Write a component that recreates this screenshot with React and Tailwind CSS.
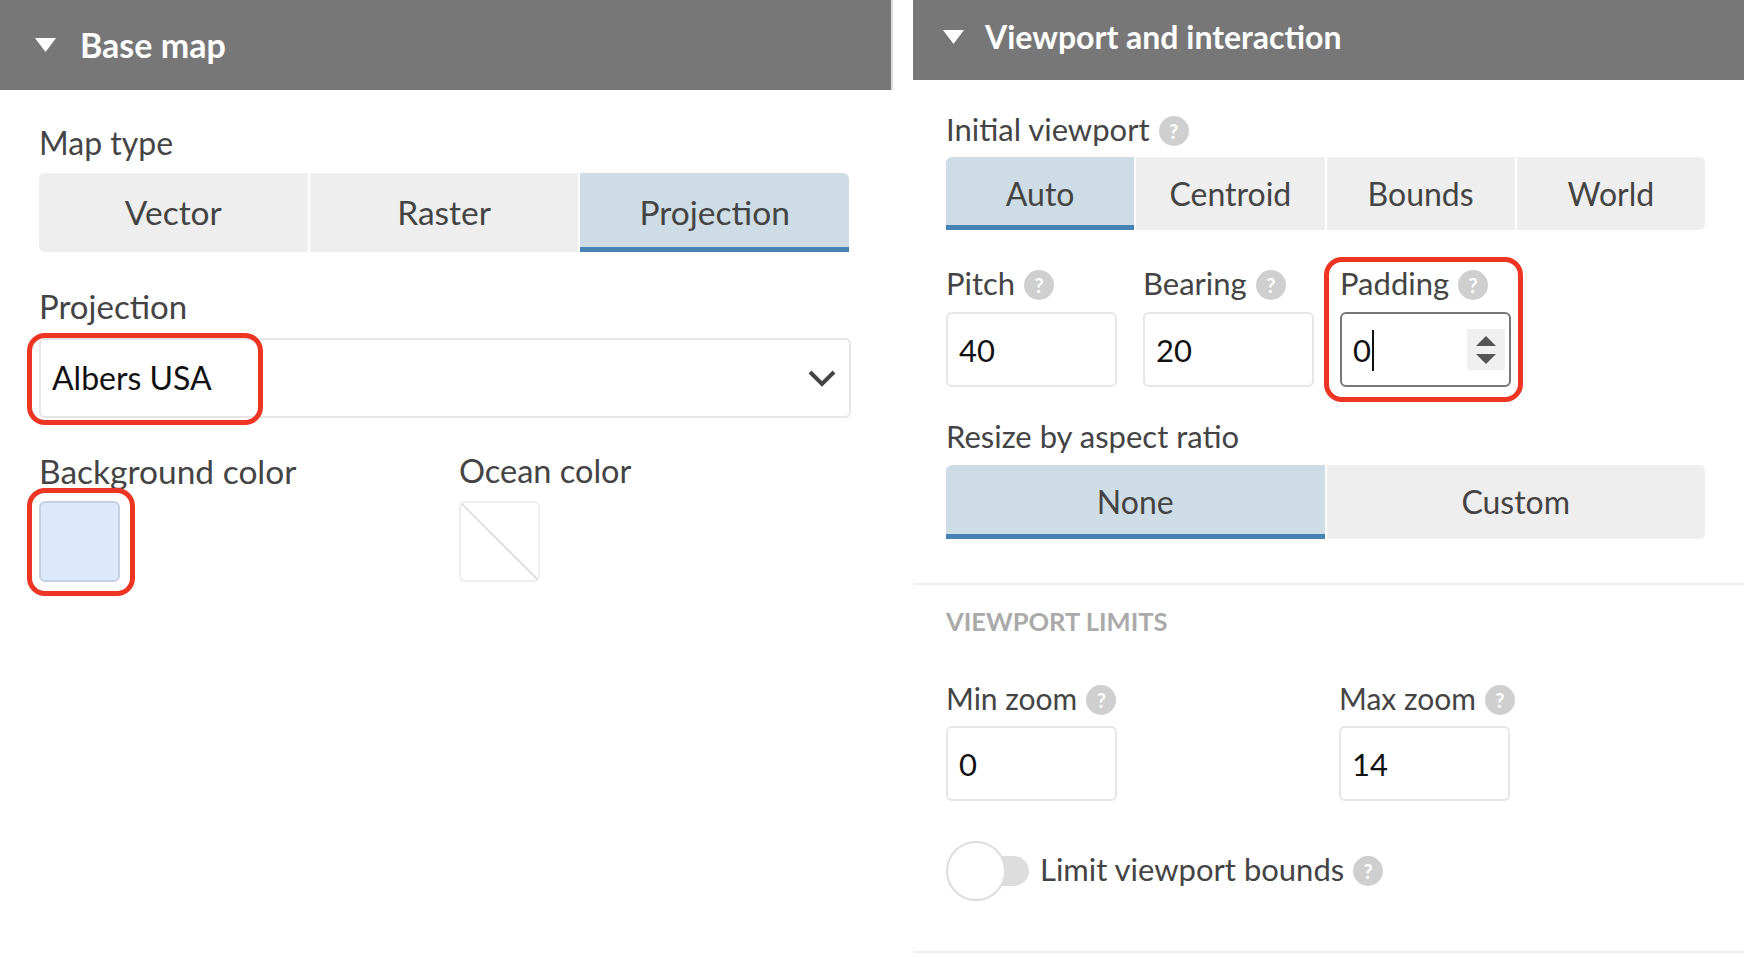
import React from "react";

const font = "font-['Lato','Noto_Sans',sans-serif]";

const Help = () => (
  <span className="ml-[9px] inline-flex h-[30px] w-[30px] shrink-0 items-center justify-center rounded-full bg-[#cfcfcf] text-[20px] font-bold leading-none text-white">
    ?
  </span>
);

// label sizes differ a little per label, the reference font has other widths than Lato
const Label = ({ children, help, size = "text-[31px]" }) => (
  <div className={`flex h-[38px] items-center whitespace-nowrap leading-[38px] text-[#444] ${size}`}>
    <span className="-mt-[4px]">{children}</span>
    {help && <Help />}
  </div>
);

const Triangle = () => (
  <svg width="21" height="14" viewBox="0 0 21 14" className="shrink-0">
    <polygon points="0,0 21,0 10.5,14" fill="#fff" />
  </svg>
);

const Segments = ({ items, active, height, large }) => (
  <div className={`flex gap-[2px] ${height}`}>
    {items.map((item, i) => {
      const isActive = item === active;
      return (
        <div
          key={item}
          className={`flex flex-1 items-center justify-center border-b-[5px] pt-[5px] text-[#444] ${large ? "text-[33.5px]" : "text-[32px]"} ${
            isActive ? "border-[#4682b4] bg-[#cedce5]" : "border-[#eeeeee] bg-[#eeeeee]"
          } ${i === 0 ? (isActive ? "rounded-tl-[6px]" : "rounded-l-[6px]") : ""} ${
            i === items.length - 1 ? (isActive ? "rounded-tr-[6px]" : "rounded-r-[6px]") : ""
          }`}
        >
          {item}
        </div>
      );
    })}
  </div>
);

const NumberField = ({ value, focused }) => (
  <div
    className={
      focused
        ? "relative flex h-[75px] w-[171px] items-center rounded-[6px] border-2 border-[#777] pl-[11px] pt-[2px] text-[31px] text-[#111]"
        : "flex h-[75px] w-[171px] items-center rounded-[6px] border-2 border-[#e6e6e6] pl-[11px] pt-[2px] text-[31px] text-[#111]"
    }
  >
    <span>{value}</span>
    {focused && (
      <>
        <span className="ml-[1px] h-[41px] w-[2px] bg-[#111]" />
        <span className="absolute right-[4px] top-[15px] flex h-[41px] w-[38px] flex-col items-center justify-center gap-[8px] bg-[#f0f0f0]">
          <svg width="20" height="10" viewBox="0 0 20 10">
            <polygon points="10,0 20,10 0,10" fill="#555" />
          </svg>
          <svg width="20" height="10" viewBox="0 0 20 10">
            <polygon points="0,0 20,0 10,10" fill="#555" />
          </svg>
        </span>
      </>
    )}
  </div>
);

const RedBox = ({ className }) => (
  <div className={`pointer-events-none absolute rounded-[18px] border-[5px] border-[#ee3524] ${className}`} />
);

export default function App() {
  return (
    <div className={`flex min-h-[958px] w-[1744px] overflow-hidden bg-white ${font}`}>
      {/* Base map */}
      <div className="w-[893px] shrink-0">
        <div className="flex h-[90px] items-center border-r-2 border-[#ddd] bg-[#777] pl-[35px] text-white">
          <Triangle />
          <span className="ml-[24px] text-[34px] font-bold leading-none">Base map</span>
        </div>
        <div className="pl-[39px] pt-[36px]">
          <Label size="text-[32px]">Map type</Label>
          <div className="mt-[9px] w-[810px]">
            <Segments items={["Vector", "Raster", "Projection"]} active="Projection" height="h-[79px]" large />
          </div>

          <div className="mt-[37px]">
            <Label size="text-[33px]">Projection</Label>
          </div>
          <div className="relative mt-[11px]">
            <div className="flex h-[80px] w-[812px] items-center justify-between rounded-[6px] border-2 border-[#e6e6e6] pl-[11px] pr-[13px] text-[32px] text-[#111]">
              <span>Albers USA</span>
              <svg width="28" height="18" viewBox="0 0 28 18" fill="none">
                <path d="M2 3 L14 15 L26 3" stroke="#444" strokeWidth="4" />
              </svg>
            </div>
            <RedBox className="-left-[12px] -top-[5px] h-[92px] w-[236px]" />
          </div>

          <div className="mt-[36px] flex">
            <div className="relative w-[420px]">
              <Label size="text-[33.5px]">Background color</Label>
              <div className="mt-[9px] h-[81px] w-[81px] rounded-[6px] border-2 border-[#c5d1e3] bg-[#dce8fb]" />
              <RedBox className="-left-[12px] top-[34px] h-[108px] w-[108px]" />
            </div>
            <div>
              <Label size="text-[32.5px]">Ocean color</Label>
              <div className="mt-[9px] h-[81px] w-[81px] rounded-[6px] border-2 border-[#eeeeee]">
                <svg viewBox="0 0 77 77" className="h-full w-full" preserveAspectRatio="none">
                  <line x1="0" y1="0" x2="77" y2="77" stroke="#e0e0e0" strokeWidth="2" />
                </svg>
              </div>
            </div>
          </div>
        </div>
      </div>

      {/* Viewport and interaction */}
      <div className="ml-[20px] flex-1">
        <div className="flex h-[80px] items-center bg-[#777] pb-[6px] pl-[30px] text-white">
          <Triangle />
          <span className="ml-[21px] text-[32px] font-bold leading-none">Viewport and interaction</span>
        </div>

        <div className="pl-[33px] pr-[39px] pt-[32px]">
          <Label help>Initial viewport</Label>
          <div className="mt-[7px]">
            <Segments items={["Auto", "Centroid", "Bounds", "World"]} active="Auto" height="h-[73px]" />
          </div>

          <div className="mt-[36px] flex gap-[26px]">
            <div className="w-[171px]">
              <Label help>Pitch</Label>
              <div className="mt-[8px]">
                <NumberField value="40" />
              </div>
            </div>
            <div className="w-[171px]">
              <Label help>Bearing</Label>
              <div className="mt-[8px]">
                <NumberField value="20" />
              </div>
            </div>
            <div className="relative w-[171px]">
              <Label help>Padding</Label>
              <div className="mt-[8px]">
                <NumberField value="0" focused />
              </div>
              <RedBox className="-left-[16px] -top-[9px] h-[145px] w-[199px]" />
            </div>
          </div>

          <div className="mt-[32px]">
            <Label>Resize by aspect ratio</Label>
          </div>
          <div className="mt-[8px]">
            <Segments items={["None", "Custom"]} active="None" height="h-[74px]" />
          </div>
        </div>

        <div className="mt-[44px] h-[2px] bg-[#eeeeee]" />

        <div className="pl-[33px] pr-[39px] pt-[21px]">
          <div className="h-[30px] text-[25.5px] font-bold uppercase leading-[30px] text-[#aaa]">Viewport limits</div>

          <div className="mt-[45px] flex gap-[222px]">
            <div className="w-[171px]">
              <Label help size="text-[30px]">Min zoom</Label>
              <div className="mt-[7px]">
                <NumberField value="0" />
              </div>
            </div>
            <div className="w-[171px]">
              <Label help size="text-[30px]">Max zoom</Label>
              <div className="mt-[7px]">
                <NumberField value="14" />
              </div>
            </div>
          </div>

          <div className="mt-[40px] flex h-[60px] items-center">
            <div className="relative h-[60px] w-[83px] shrink-0">
              <div className="absolute left-[30px] top-[15px] h-[30px] w-[53px] rounded-full bg-[#dddddd]" />
              <div className="absolute left-0 top-0 h-[60px] w-[60px] rounded-full border-2 border-[#dddddd] bg-white" />
            </div>
            <span className="-mt-[4px] ml-[11px] text-[31px] text-[#444]">Limit viewport bounds</span>
            <Help />
          </div>
        </div>

        <div className="mt-[50px] h-[2px] bg-[#eeeeee]" />
      </div>
    </div>
  );
}
